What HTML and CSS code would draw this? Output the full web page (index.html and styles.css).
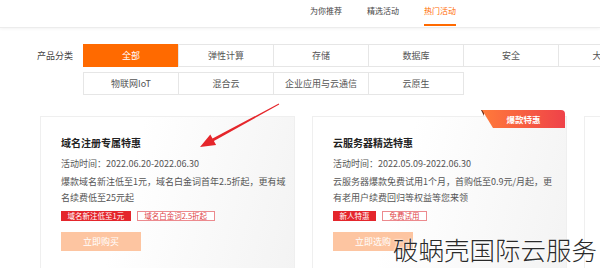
FILE: index.html
```html
<!DOCTYPE html>
<html lang="zh-CN">
<head>
  <meta charset="UTF-8" />
  <meta name="viewport" content="width=device-width, initial-scale=1.0"/>
  <title>热门活动</title>
  <link rel="stylesheet" href="styles.css">
</head>
<body>
  <div class="header">
    <div class="tabs">
      <span class="tab">为你推荐</span>
      <span class="tab">精选活动</span>
      <span class="tab active">热门活动</span>
    </div>
  </div>

  <div class="filter">
    <div class="filter-label">产品分类</div>
    <div class="filter-rows">
      <div class="filter-row">
        <span class="cell active">全部</span>
        <span class="cell">弹性计算</span>
        <span class="cell">存储</span>
        <span class="cell">数据库</span>
        <span class="cell">安全</span>
        <span class="cell">大数据</span>
      </div>
      <div class="filter-row">
        <span class="cell">物联网IoT</span>
        <span class="cell">混合云</span>
        <span class="cell">企业应用与云通信</span>
        <span class="cell">云原生</span>
      </div>
    </div>
  </div>

  <div class="cards">
    <div class="card">
      <div class="card-title">域名注册专属特惠</div>
      <div class="card-time">活动时间：2022.06.20-2022.06.30</div>
      <div class="card-desc">爆款域名新注低至1元，域名白金词首年2.5折起，更有域<br>名续费低至25元起</div>
      <div class="tags">
        <span class="tag solid">域名新注低至1元</span>
        <span class="tag line">域名白金词2.5折起</span>
      </div>
      <div class="buy">立即购买</div>
    </div>

    <div class="card">
      <span class="badge-fold"></span>
      <span class="badge">爆款特惠</span>
      <div class="card-title">云服务器精选特惠</div>
      <div class="card-time">活动时间：2022.05.09-2022.06.30</div>
      <div class="card-desc">云服务器爆款免费试用1个月，首购低至0.9元/月起，更<br>有老用户续费回归等权益等您来领</div>
      <div class="tags">
        <span class="tag solid">新人特惠</span>
        <span class="tag line">免费试用</span>
      </div>
      <div class="buy">立即选购</div>
    </div>

    <div class="card"></div>
  </div>

  <svg class="arrow" width="600" height="268" viewBox="0 0 600 268">
    <polygon fill="#e5262b" points="278.8,103.6 212.5,138.5 210.3,134.5 200,147 216.1,145.1 213.9,141.1 279.2,104.4"/>
  </svg>

  <div class="watermark">破蜗壳国际云服务</div>
</body>
</html>
```

FILE: styles.css
```css
body {
  margin: 0;
  width: 600px;
  height: 268px;
  overflow: hidden;
  position: relative;
  background: #fff;
  font-family: "Noto Sans CJK SC", "Noto Sans", sans-serif;
  color: #333;
}
.header {
  height: 27px;
  border-bottom: 1px solid #ececec;
  box-shadow: 0 1px 3px rgba(0, 0, 0, 0.05);
}
.tabs {
  display: flex;
  gap: 25px;
  padding-left: 310px;
  padding-top: 5px;
}
.tab {
  font-size: 8px;
  line-height: 12px;
  padding-bottom: 7px;
  color: #444;
  border-bottom: 2px solid transparent;
}
.tab.active {
  color: #ff6a00;
  border-bottom-color: #ff6a00;
}
.filter {
  display: flex;
  padding: 16px 0 0 37px;
}
.filter-label {
  width: 36px;
  margin-right: 10px;
  font-size: 9px;
  line-height: 23px;
  color: #444;
  white-space: nowrap;
}
.filter-rows {
  display: flex;
  flex-direction: column;
  gap: 5px;
}
.filter-row {
  display: flex;
}
.cell {
  flex: none;
  width: 96px;
  height: 23px;
  box-sizing: border-box;
  margin-right: -1px;
  border: 1px solid #e6e6e6;
  font-size: 9px;
  line-height: 21px;
  text-align: center;
  color: #555;
  white-space: nowrap;
  overflow: hidden;
}
.cell.active {
  background: #ff6a00;
  border-color: #ff6a00;
  color: #fff;
}
.cards {
  display: flex;
  gap: 17px;
  margin-top: 21px;
  padding-left: 40px;
}
.card {
  flex: none;
  position: relative;
  width: 255px;
  height: 160px;
  box-sizing: border-box;
  padding: 19px 10px 0 20px;
  border: 1px solid #efefef;
  background: linear-gradient(105deg, #fff 35%, #f3f3f3 100%);
}
.card-title {
  font-size: 10px;
  line-height: 14px;
  font-weight: bold;
  color: #222;
}
.card-time {
  margin-top: 7px;
  font-size: 9px;
  line-height: 14px;
  color: #555;
}
.card-desc {
  margin-top: 3px;
  font-size: 9px;
  line-height: 16px;
  color: #555;
  white-space: nowrap;
}
.tags {
  display: flex;
  gap: 6px;
  margin-top: 5px;
}
.tag {
  height: 10px;
  box-sizing: border-box;
  padding: 0 6.5px;
  font-size: 7.5px;
  line-height: 10px;
  white-space: nowrap;
}
.tag.solid {
  background: #e4262c;
  color: #fff;
}
.tag.line {
  border: 1px solid #ec8a8e;
  line-height: 8px;
  color: #e0454a;
  background: #fff;
}
.buy {
  width: 80px;
  height: 19px;
  margin-top: 11px;
  background: #fdc5a1;
  color: #fff;
  font-size: 9px;
  line-height: 19px;
  text-align: center;
}
.badge {
  position: absolute;
  top: -7px;
  right: 1px;
  width: 83px;
  height: 18px;
  background: linear-gradient(90deg, #ff7a3a, #ef4249);
  clip-path: polygon(0 0, 100% 0, 100% 100%, 11px 100%);
  border-top-right-radius: 4px;
  color: #fff;
  font-size: 8.5px;
  font-weight: bold;
  line-height: 18px;
  text-align: center;
}
.badge-fold {
  position: absolute;
  top: -7px;
  right: 82px;
  width: 0;
  height: 0;
  border-left: 3px solid transparent;
  border-top: 6px solid #6b2a12;
}
.arrow {
  position: absolute;
  left: 0;
  top: 0;
  pointer-events: none;
}
.watermark {
  position: absolute;
  left: 393px;
  top: 236px;
  font-size: 25.5px;
  line-height: 1;
  font-weight: 300;
  color: #2a2a2a;
  white-space: nowrap;
  text-shadow: 0 0 2px #fff, 0 0 2px #fff;
}
```
